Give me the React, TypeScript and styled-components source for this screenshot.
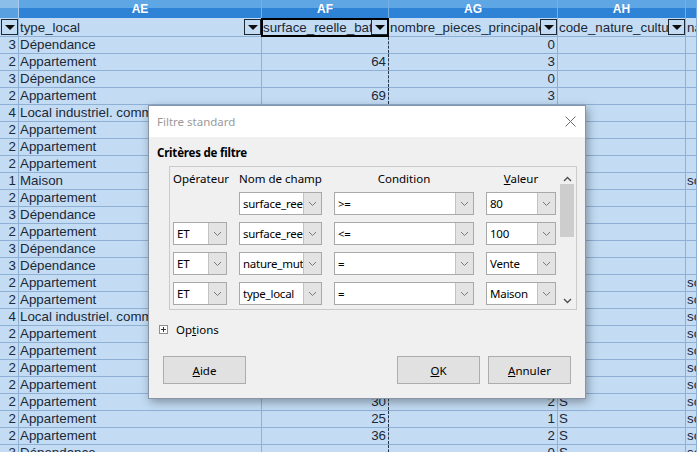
import styled, { createGlobalStyle } from 'styled-components'

const GRID = '19px 243px 127px 169px 128px 1fr'
const LINE = '#8eb0d4'
const CELL = '#c3dcf3'

const GlobalStyle = createGlobalStyle`
  html, body {
    margin: 0;
    padding: 0;
  }
  body {
    width: 697px;
    height: 452px;
    overflow: hidden;
    background: ${CELL};
    font-family: 'Liberation Sans', Arial, sans-serif;
  }
`

const Screen = styled.div`
  position: relative;
  width: 697px;
  height: 452px;
  overflow: hidden;
`

/* ---------- spreadsheet ---------- */

const HeaderRow = styled.div`
  display: grid;
  grid-template-columns: ${GRID};
  height: 18px;
`

const ColHead = styled.div<{ $side?: boolean }>`
  box-sizing: border-box;
  border-right: 1px solid ${p => (p.$side ? '#a6cbef' : '#76afe6')};
  background: ${p =>
    p.$side
      ? 'linear-gradient(#8cbeea 0 45%, #58a0e0 45%)'
      : 'linear-gradient(#5fa6e5 0 45%, #2f83d7 45%)'};
  color: #fff;
  font: bold 12px 'Liberation Sans', Arial, sans-serif;
  display: flex;
  align-items: center;
  justify-content: center;
`

const FilterRow = styled.div`
  display: grid;
  grid-template-columns: ${GRID};
  height: 18px;
  border-bottom: 1px solid ${LINE};
`

const FilterCell = styled.div<{ $cursor?: boolean }>`
  position: relative;
  box-sizing: border-box;
  border-right: 1px solid ${LINE};
  display: flex;
  align-items: center;
  padding-left: 1px;
  font-size: 13.33px;
  color: #1b2838;
  white-space: nowrap;
  overflow: hidden;

  ${p =>
    p.$cursor &&
    `
    overflow: visible;
    &::after {
      content: '';
      position: absolute;
      left: -1px;
      top: 0;
      right: -1px;
      bottom: -1px;
      border: 2px solid #000;
      pointer-events: none;
    }
  `}
`

const FilterLabel = styled.span`
  flex: 1;
  min-width: 0;
  overflow: hidden;
`

const Misspelt = styled.span`
  text-decoration: underline wavy #d42020;
  text-decoration-thickness: 1px;
  text-underline-offset: 2px;
`

const DropButton = styled.span`
  flex: none;
  width: 17px;
  height: 16px;
  box-sizing: border-box;
  margin-left: auto;
  border: 1px solid #1d2733;
  display: flex;
  align-items: center;
  justify-content: center;

  &::before {
    content: '';
    border-left: 5px solid transparent;
    border-right: 5px solid transparent;
    border-top: 5px solid #0d0d0d;
  }
`

const DataRow = styled.div`
  display: grid;
  grid-template-columns: ${GRID};
  height: 17px;
  box-sizing: border-box;
  border-bottom: 1px solid ${LINE};
`

const Cell = styled.div<{ $num?: boolean; $dashed?: boolean }>`
  box-sizing: border-box;
  border-right: 1px ${p => (p.$dashed ? 'dashed #26364d' : `solid ${LINE}`)};
  padding: 0 2px 0 1px;
  font-size: 13.33px;
  line-height: 16px;
  color: #1b2838;
  text-align: ${p => (p.$num ? 'right' : 'left')};
  white-space: nowrap;
  overflow: hidden;
`

type Row = [string, string, string, string, string, string]

const rows: Row[] = [
  ['3', 'Dépendance', '', '0', '', ''],
  ['2', 'Appartement', '64', '3', '', ''],
  ['3', 'Dépendance', '', '0', '', ''],
  ['2', 'Appartement', '69', '3', '', ''],
  ['4', 'Local industriel. commercial ou assimilé', '', '0', '', ''],
  ['2', 'Appartement', '47', '2', '', ''],
  ['2', 'Appartement', '58', '3', '', ''],
  ['2', 'Appartement', '33', '1', '', ''],
  ['1', 'Maison', '92', '4', 'S', 'sols'],
  ['2', 'Appartement', '41', '2', '', ''],
  ['3', 'Dépendance', '', '0', '', ''],
  ['2', 'Appartement', '62', '3', '', ''],
  ['3', 'Dépendance', '', '0', '', ''],
  ['3', 'Dépendance', '', '0', '', ''],
  ['2', 'Appartement', '28', '1', 'S', 'sols'],
  ['2', 'Appartement', '44', '2', 'S', 'sols'],
  ['4', 'Local industriel. commercial ou assimilé', '', '0', 'S', 'sols'],
  ['2', 'Appartement', '52', '2', 'S', 'sols'],
  ['2', 'Appartement', '38', '2', 'S', 'sols'],
  ['2', 'Appartement', '66', '3', 'S', 'sols'],
  ['2', 'Appartement', '48', '2', 'S', 'sols'],
  ['2', 'Appartement', '30', '2', 'S', 'sols'],
  ['2', 'Appartement', '25', '1', 'S', 'sols'],
  ['2', 'Appartement', '36', '2', 'S', 'sols'],
  ['3', 'Dépendance', '', '0', 'S', 'sols'],
]

/* ---------- dialog ---------- */

const Dialog = styled.div`
  position: absolute;
  left: 148px;
  top: 105px;
  width: 438px;
  height: 294px;
  box-sizing: border-box;
  border: 1px solid #8795a6;
  background: #f0f0f0;
  box-shadow: 2px 3px 9px rgba(0, 0, 0, 0.35);
  display: flex;
  flex-direction: column;
  font-family: 'Noto Sans', 'Open Sans', sans-serif;
  font-size: 11.5px;
  color: #000;
`

const TitleBar = styled.div`
  height: 31px;
  flex: none;
  background: #fff;
  display: flex;
  align-items: center;
  justify-content: space-between;
  padding: 0 9px 0 8px;
  color: #9a9a9a;
  font-size: 11.5px;
`

const Body = styled.div`
  flex: 1;
  display: flex;
  flex-direction: column;
  padding: 8px 8px 0;
`

const Heading = styled.div`
  font-weight: bold;
  height: 16px;
  line-height: 16px;
  letter-spacing: -0.2px;
`

const CriteriaBox = styled.div`
  margin: 5px 0 0 12px;
  height: 144px;
  box-sizing: border-box;
  border: 1px solid #cacaca;
  display: flex;
`

const CriteriaGrid = styled.div`
  flex: 1;
  display: grid;
  grid-template-columns: 54px 83px 140px 70px;
  grid-template-rows: 25px repeat(4, 30px);
  column-gap: 12px;
  padding-left: 3px;
  align-items: start;
`

const ColLabel = styled.div`
  height: 25px;
  line-height: 24px;
  text-align: center;
  white-space: nowrap;
`

const Combo = styled.div`
  display: flex;
  height: 23px;
  box-sizing: border-box;
  border: 1px solid #a9a9a9;
  background: #fff;
`

const ComboText = styled.span`
  flex: 1;
  min-width: 0;
  overflow: hidden;
  white-space: nowrap;
  padding-left: 3px;
  line-height: 21px;
  letter-spacing: -0.25px;
`

const ComboButton = styled.span`
  flex: none;
  width: 17px;
  background: #e3e3e3;
  border-left: 1px solid #c2c2c2;
  display: flex;
  align-items: center;
  justify-content: center;
`

const ScrollBar = styled.div`
  flex: none;
  width: 16px;
  margin-right: 1px;
  display: flex;
  flex-direction: column;
`

const ScrollArrow = styled.div<{ $down?: boolean }>`
  height: 17px;
  display: flex;
  align-items: center;
  justify-content: center;
  box-sizing: border-box;
  padding-top: ${p => (p.$down ? '0' : '6px')};
`

const ScrollThumb = styled.div`
  height: 53px;
  margin: 0 1px;
  background: #cdcdcd;
`

const ScrollTrack = styled.div`
  flex: 1;
`

const OptionsRow = styled.div`
  margin: 10px 0 0 2px;
  height: 18px;
  display: flex;
  align-items: center;
  gap: 8px;
`

const Expander = styled.span`
  width: 9px;
  height: 9px;
  box-sizing: border-box;
  border: 1px solid #8f8f8f;
  background: #fff;
  position: relative;

  &::before,
  &::after {
    content: '';
    position: absolute;
    background: #333;
  }
  &::before {
    left: 1px;
    right: 1px;
    top: 3px;
    height: 1px;
  }
  &::after {
    top: 1px;
    bottom: 1px;
    left: 3px;
    width: 1px;
  }
`

const ButtonRow = styled.div`
  margin-top: 18px;
  padding: 0 6px;
  display: flex;
  gap: 8px;
`

const Button = styled.button<{ $push?: boolean }>`
  width: 83px;
  height: 28px;
  box-sizing: border-box;
  border: 1px solid #adadad;
  background: #e1e1e1;
  font: inherit;
  color: #000;
  padding: 0;
  margin-right: ${p => (p.$push ? 'auto' : '0')};
`

const Key = styled.span`
  text-decoration: underline;
  text-underline-offset: 1px;
`

function Chevron({ up = false, dark = false }: { up?: boolean; dark?: boolean }) {
  return (
    <svg width="9" height="6" viewBox="0 0 9 6">
      <path
        d={up ? 'M1 5 L4.5 1.5 L8 5' : 'M1 1 L4.5 4.5 L8 1'}
        fill="none"
        stroke={dark ? '#505050' : '#7a7a7a'}
        strokeWidth={dark ? 1.4 : 1}
      />
    </svg>
  )
}

function ComboBox({ value }: { value: string }) {
  return (
    <Combo>
      <ComboText>{value}</ComboText>
      <ComboButton>
        <Chevron />
      </ComboButton>
    </Combo>
  )
}

const criteria = [
  { op: '', field: 'surface_reelle_bati', cond: '>=', value: '80' },
  { op: 'ET', field: 'surface_reelle_bati', cond: '<=', value: '100' },
  { op: 'ET', field: 'nature_mutation', cond: '=', value: 'Vente' },
  { op: 'ET', field: 'type_local', cond: '=', value: 'Maison' },
]

export default function App() {
  return (
    <Screen>
      <GlobalStyle />

      <HeaderRow>
        <ColHead $side />
        <ColHead>AE</ColHead>
        <ColHead>AF</ColHead>
        <ColHead>AG</ColHead>
        <ColHead>AH</ColHead>
        <ColHead />
      </HeaderRow>

      <FilterRow>
        <FilterCell>
          <DropButton />
        </FilterCell>
        <FilterCell>
          <FilterLabel>type_local</FilterLabel>
          <DropButton />
        </FilterCell>
        <FilterCell $cursor>
          <FilterLabel>
            surface_<Misspelt>reelle</Misspelt>_bati
          </FilterLabel>
          <DropButton />
        </FilterCell>
        <FilterCell>
          <FilterLabel>
            nombre_<Misspelt>pieces</Misspelt>_principales
          </FilterLabel>
          <DropButton />
        </FilterCell>
        <FilterCell>
          <FilterLabel>code_nature_culture</FilterLabel>
          <DropButton />
        </FilterCell>
        <FilterCell>
          <FilterLabel>nature_culture</FilterLabel>
        </FilterCell>
      </FilterRow>

      {rows.map((r, i) => (
        <DataRow key={i}>
          <Cell $num>{r[0]}</Cell>
          <Cell>{r[1]}</Cell>
          <Cell $num $dashed>
            {r[2]}
          </Cell>
          <Cell $num>{r[3]}</Cell>
          <Cell>{r[4]}</Cell>
          <Cell>{r[5]}</Cell>
        </DataRow>
      ))}

      <Dialog>
        <TitleBar>
          <span>Filtre standard</span>
          <svg width="11" height="11" viewBox="0 0 11 11">
            <path d="M0.5 0.5 L10.5 10.5 M10.5 0.5 L0.5 10.5" stroke="#6b6b6b" strokeWidth="1" />
          </svg>
        </TitleBar>

        <Body>
          <Heading>Critères de filtre</Heading>

          <CriteriaBox>
            <CriteriaGrid>
              <ColLabel>Opérateur</ColLabel>
              <ColLabel>Nom de champ</ColLabel>
              <ColLabel>Condition</ColLabel>
              <ColLabel>
                <Key>V</Key>aleur
              </ColLabel>
              {criteria.map((c, i) => [
                c.op ? <ComboBox key={`o${i}`} value={c.op} /> : <span key={`o${i}`} />,
                <ComboBox key={`f${i}`} value={c.field} />,
                <ComboBox key={`c${i}`} value={c.cond} />,
                <ComboBox key={`v${i}`} value={c.value} />,
              ])}
            </CriteriaGrid>
            <ScrollBar>
              <ScrollArrow>
                <Chevron up dark />
              </ScrollArrow>
              <ScrollThumb />
              <ScrollTrack />
              <ScrollArrow $down>
                <Chevron dark />
              </ScrollArrow>
            </ScrollBar>
          </CriteriaBox>

          <OptionsRow>
            <Expander />
            <span>
              Op<Key>t</Key>ions
            </span>
          </OptionsRow>

          <ButtonRow>
            <Button $push>
              <Key>A</Key>ide
            </Button>
            <Button>
              <Key>O</Key>K
            </Button>
            <Button>
              <Key>A</Key>nnuler
            </Button>
          </ButtonRow>
        </Body>
      </Dialog>
    </Screen>
  )
}
